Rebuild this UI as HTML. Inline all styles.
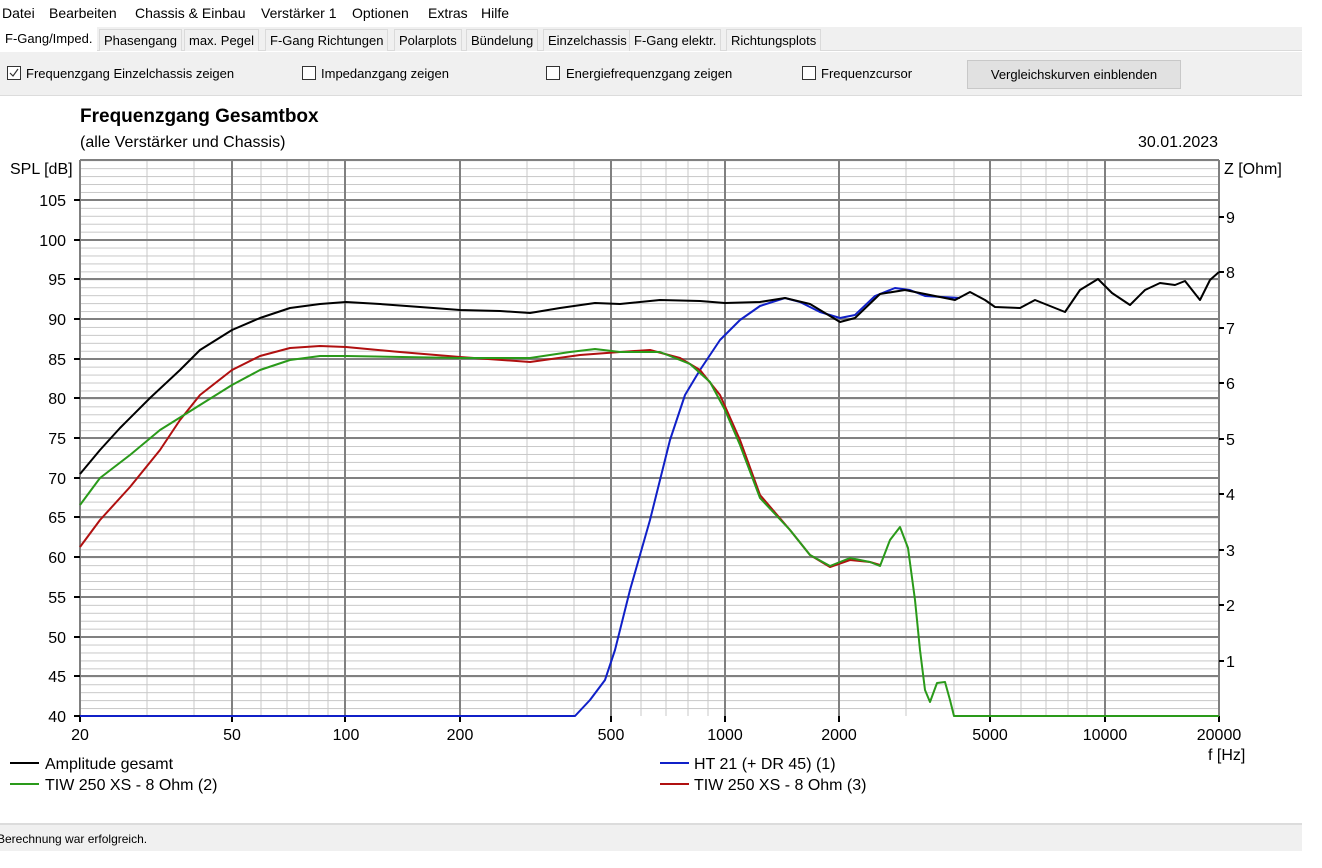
<!DOCTYPE html>
<html><head><meta charset="utf-8"><style>
*{margin:0;padding:0;box-sizing:border-box}
body{width:1322px;height:868px;background:#fff;font-family:"Liberation Sans",sans-serif;position:relative;overflow:hidden;color:#000}
.abs{position:absolute;white-space:nowrap}
.menu{font-size:14px;top:5px}
.tabs{position:absolute;left:0;top:27px;width:1302px;height:24px;background:#f0f0f0;border-bottom:1px solid #dadada}
.tab{position:absolute;top:2px;height:22px;font-size:13px;line-height:22px;border:1px solid #dadada;border-bottom:none;padding:0 4px;background:#f0f0f0}
.tb{position:absolute;left:0;top:52px;width:1302px;height:44px;background:#f0f0f0;border-bottom:1px solid #dcdcdc}
.cb{position:absolute;top:14px;width:14px;height:14px;border:1px solid #333;background:#fff}
.lbl{position:absolute;top:14px;font-size:13px}
</style></head><body>
<div class="abs menu" style="left:2px">Datei</div>
<div class="abs menu" style="left:49px">Bearbeiten</div>
<div class="abs menu" style="left:135px">Chassis &amp; Einbau</div>
<div class="abs menu" style="left:261px">Verstärker 1</div>
<div class="abs menu" style="left:352px">Optionen</div>
<div class="abs menu" style="left:428px">Extras</div>
<div class="abs menu" style="left:481px">Hilfe</div>
<div class="tabs">
<div class="tab" style="left:0;top:0;height:25px;background:#fff;border-color:#fff">F-Gang/Imped.</div>
<div class="tab" style="left:99px">Phasengang</div>
<div class="tab" style="left:184px">max. Pegel</div>
<div class="tab" style="left:265px">F-Gang Richtungen</div>
<div class="tab" style="left:394px">Polarplots</div>
<div class="tab" style="left:466px">Bündelung</div>
<div class="tab" style="left:543px">Einzelchassis</div>
<div class="tab" style="left:629px">F-Gang elektr.</div>
<div class="tab" style="left:726px">Richtungsplots</div>
</div>
<div class="tb">
<div class="cb" style="left:7px"><svg width="12" height="12" style="position:absolute;left:0;top:0"><path d="M2 6 L5 9 L10 2" stroke="#333" stroke-width="1.2" fill="none"/></svg></div>
<div class="lbl" style="left:26px">Frequenzgang Einzelchassis zeigen</div>
<div class="cb" style="left:302px"></div><div class="lbl" style="left:321px">Impedanzgang zeigen</div>
<div class="cb" style="left:546px"></div><div class="lbl" style="left:566px">Energiefrequenzgang zeigen</div>
<div class="cb" style="left:802px"></div><div class="lbl" style="left:821px">Frequenzcursor</div>
<div style="position:absolute;left:967px;top:8px;width:214px;height:29px;background:#e1e1e1;border:1px solid #c8c8c8;font-size:13px;text-align:center;line-height:27px">Vergleichskurven einblenden</div>
</div>
<div class="abs" style="left:80px;top:106px;font-size:19px;font-weight:bold">Frequenzgang Gesamtbox</div>
<div class="abs" style="left:80px;top:134px;font-size:16px">(alle Verstärker und Chassis)</div>
<div class="abs" style="left:1138px;top:134px;font-size:16px">30.01.2023</div>
<svg class="abs" style="left:0;top:0" width="1322" height="868">
<defs><pattern id="hm" x="0" y="160.2" width="10" height="7.94" patternUnits="userSpaceOnUse"><line x1="0" y1="0.5" x2="10" y2="0.5" stroke="#c8c8c8" stroke-width="1"/></pattern></defs>
<rect x="80" y="160" width="1139" height="556" fill="url(#hm)"/>
<g stroke="#c8c8c8" stroke-width="1">
<line x1="147" y1="160" x2="147" y2="716"/><line x1="194" y1="160" x2="194" y2="716"/><line x1="261" y1="160" x2="261" y2="716"/><line x1="287" y1="160" x2="287" y2="716"/><line x1="309" y1="160" x2="309" y2="716"/><line x1="328" y1="160" x2="328" y2="716"/>
<line x1="527" y1="160" x2="527" y2="716"/><line x1="574" y1="160" x2="574" y2="716"/><line x1="641" y1="160" x2="641" y2="716"/><line x1="666" y1="160" x2="666" y2="716"/><line x1="688" y1="160" x2="688" y2="716"/><line x1="708" y1="160" x2="708" y2="716"/>
<line x1="906" y1="160" x2="906" y2="716"/><line x1="954" y1="160" x2="954" y2="716"/><line x1="1021" y1="160" x2="1021" y2="716"/><line x1="1046" y1="160" x2="1046" y2="716"/><line x1="1068" y1="160" x2="1068" y2="716"/><line x1="1087" y1="160" x2="1087" y2="716"/>
</g>
<g stroke="#808080" stroke-width="2">
<line x1="80" y1="160" x2="1219" y2="160"/>
<line x1="80" y1="200" x2="1219" y2="200"/><line x1="80" y1="240" x2="1219" y2="240"/><line x1="80" y1="279" x2="1219" y2="279"/><line x1="80" y1="319" x2="1219" y2="319"/><line x1="80" y1="359" x2="1219" y2="359"/><line x1="80" y1="398" x2="1219" y2="398"/><line x1="80" y1="438" x2="1219" y2="438"/><line x1="80" y1="478" x2="1219" y2="478"/><line x1="80" y1="517" x2="1219" y2="517"/><line x1="80" y1="557" x2="1219" y2="557"/><line x1="80" y1="597" x2="1219" y2="597"/><line x1="80" y1="637" x2="1219" y2="637"/><line x1="80" y1="676" x2="1219" y2="676"/>
<line x1="80" y1="160" x2="80" y2="716"/><line x1="232" y1="160" x2="232" y2="716"/><line x1="345" y1="160" x2="345" y2="716"/><line x1="460" y1="160" x2="460" y2="716"/><line x1="611" y1="160" x2="611" y2="716"/><line x1="725" y1="160" x2="725" y2="716"/><line x1="839" y1="160" x2="839" y2="716"/><line x1="990" y1="160" x2="990" y2="716"/><line x1="1105" y1="160" x2="1105" y2="716"/><line x1="1219" y1="160" x2="1219" y2="716"/>
</g>
<g stroke="#000" stroke-width="2">
<line x1="74" y1="200" x2="80" y2="200"/><line x1="74" y1="240" x2="80" y2="240"/><line x1="74" y1="279" x2="80" y2="279"/><line x1="74" y1="319" x2="80" y2="319"/><line x1="74" y1="359" x2="80" y2="359"/><line x1="74" y1="398" x2="80" y2="398"/><line x1="74" y1="438" x2="80" y2="438"/><line x1="74" y1="478" x2="80" y2="478"/><line x1="74" y1="517" x2="80" y2="517"/><line x1="74" y1="557" x2="80" y2="557"/><line x1="74" y1="597" x2="80" y2="597"/><line x1="74" y1="637" x2="80" y2="637"/><line x1="74" y1="676" x2="80" y2="676"/><line x1="74" y1="716" x2="80" y2="716"/>
<line x1="1219" y1="217" x2="1224" y2="217"/><line x1="1219" y1="272" x2="1224" y2="272"/><line x1="1219" y1="328" x2="1224" y2="328"/><line x1="1219" y1="383" x2="1224" y2="383"/><line x1="1219" y1="439" x2="1224" y2="439"/><line x1="1219" y1="494" x2="1224" y2="494"/><line x1="1219" y1="550" x2="1224" y2="550"/><line x1="1219" y1="605" x2="1224" y2="605"/><line x1="1219" y1="661" x2="1224" y2="661"/>
<line x1="80" y1="716" x2="80" y2="722"/><line x1="232" y1="716" x2="232" y2="722"/><line x1="345" y1="716" x2="345" y2="722"/><line x1="460" y1="716" x2="460" y2="722"/><line x1="611" y1="716" x2="611" y2="722"/><line x1="725" y1="716" x2="725" y2="722"/><line x1="839" y1="716" x2="839" y2="722"/><line x1="990" y1="716" x2="990" y2="722"/><line x1="1105" y1="716" x2="1105" y2="722"/><line x1="1219" y1="716" x2="1219" y2="722"/>
</g>
<g font-family="Liberation Sans, sans-serif" font-size="16" fill="#000">
<text x="10" y="174">SPL [dB]</text>
<g text-anchor="end"><text x="66" y="206">105</text><text x="66" y="246">100</text><text x="66" y="285">95</text><text x="66" y="325">90</text><text x="66" y="365">85</text><text x="66" y="404">80</text><text x="66" y="444">75</text><text x="66" y="484">70</text><text x="66" y="523">65</text><text x="66" y="563">60</text><text x="66" y="603">55</text><text x="66" y="643">50</text><text x="66" y="682">45</text><text x="66" y="722">40</text></g>
<text x="1224" y="174">Z [Ohm]</text>
<text x="1226" y="223">9</text><text x="1226" y="278">8</text><text x="1226" y="334">7</text><text x="1226" y="389">6</text><text x="1226" y="445">5</text><text x="1226" y="500">4</text><text x="1226" y="556">3</text><text x="1226" y="611">2</text><text x="1226" y="667">1</text>
<g text-anchor="middle"><text x="80" y="740">20</text><text x="232" y="740">50</text><text x="346" y="740">100</text><text x="460" y="740">200</text><text x="611" y="740">500</text><text x="725" y="740">1000</text><text x="839" y="740">2000</text><text x="990" y="740">5000</text><text x="1105" y="740">10000</text><text x="1219" y="740">20000</text></g>
<text x="1208" y="760">f [Hz]</text>
<text x="45" y="769">Amplitude gesamt</text>
<text x="45" y="790">TIW 250 XS - 8 Ohm (2)</text>
<text x="694" y="769">HT 21 (+ DR 45) (1)</text>
<text x="694" y="790">TIW 250 XS - 8 Ohm (3)</text>
</g>
<line x1="10" y1="763" x2="39" y2="763" stroke="#000" stroke-width="2"/>
<line x1="10" y1="784" x2="39" y2="784" stroke="#2a9a1a" stroke-width="2"/>
<line x1="660" y1="763" x2="689" y2="763" stroke="#1020c8" stroke-width="2"/>
<line x1="660" y1="784" x2="689" y2="784" stroke="#b01010" stroke-width="2"/>
<g fill="none" stroke-width="2" stroke-linejoin="round">
<polyline stroke="#1020c8" points="80,716 575,716 590,700 605,680 615,650 630,590 650,520 670,440 685,395 700,370 720,340 740,320 760,306 785,298 800,302 820,312 840,318 855,315 875,296 895,288 910,290 925,296 960,298"/>
<polyline stroke="#b01010" points="80,547 100,520 130,487 160,450 180,420 200,395 232,370 260,356 290,348 320,346 346,347 400,352 460,357 530,362 580,355 620,352 650,350 680,358 700,370 720,395 740,440 760,495 790,530 810,555 830,567 850,560 870,562 880,565"/>
<polyline stroke="#2a9a1a" points="80,505 100,478 130,455 160,430 200,405 232,385 260,370 290,360 320,356 346,356 460,358 530,358 570,352 595,349 620,352 660,352 690,364 710,382 725,410 740,445 760,498 790,530 810,555 830,566 850,558 870,562 880,566 890,540 900,527 908,548 915,600 920,650 925,690 930,702 937,683 945,682 950,700 954,716 1219,716"/>
<polyline stroke="#000" points="80,474 100,450 120,428 150,398 180,370 200,350 232,330 260,318 290,308 320,304 346,302 380,304 420,307 460,310 500,311 530,313 560,308 595,303 620,304 660,300 700,301 725,303 760,302 785,298 810,304 840,322 855,318 880,294 905,290 935,296 955,300 970,292 985,300 995,307 1020,308 1035,300 1050,306 1065,312 1080,290 1098,279 1112,293 1130,305 1145,290 1160,283 1175,285 1185,281 1200,300 1210,280 1219,272"/>
</g>
</svg>
<div style="position:absolute;left:0;top:823px;width:1302px;height:28px;background:#f0f0f0;border-top:2px solid #dcdcdc"></div>
<div class="abs" style="left:-3px;top:832px;font-size:12px">Berechnung war erfolgreich.</div>
</body></html>
